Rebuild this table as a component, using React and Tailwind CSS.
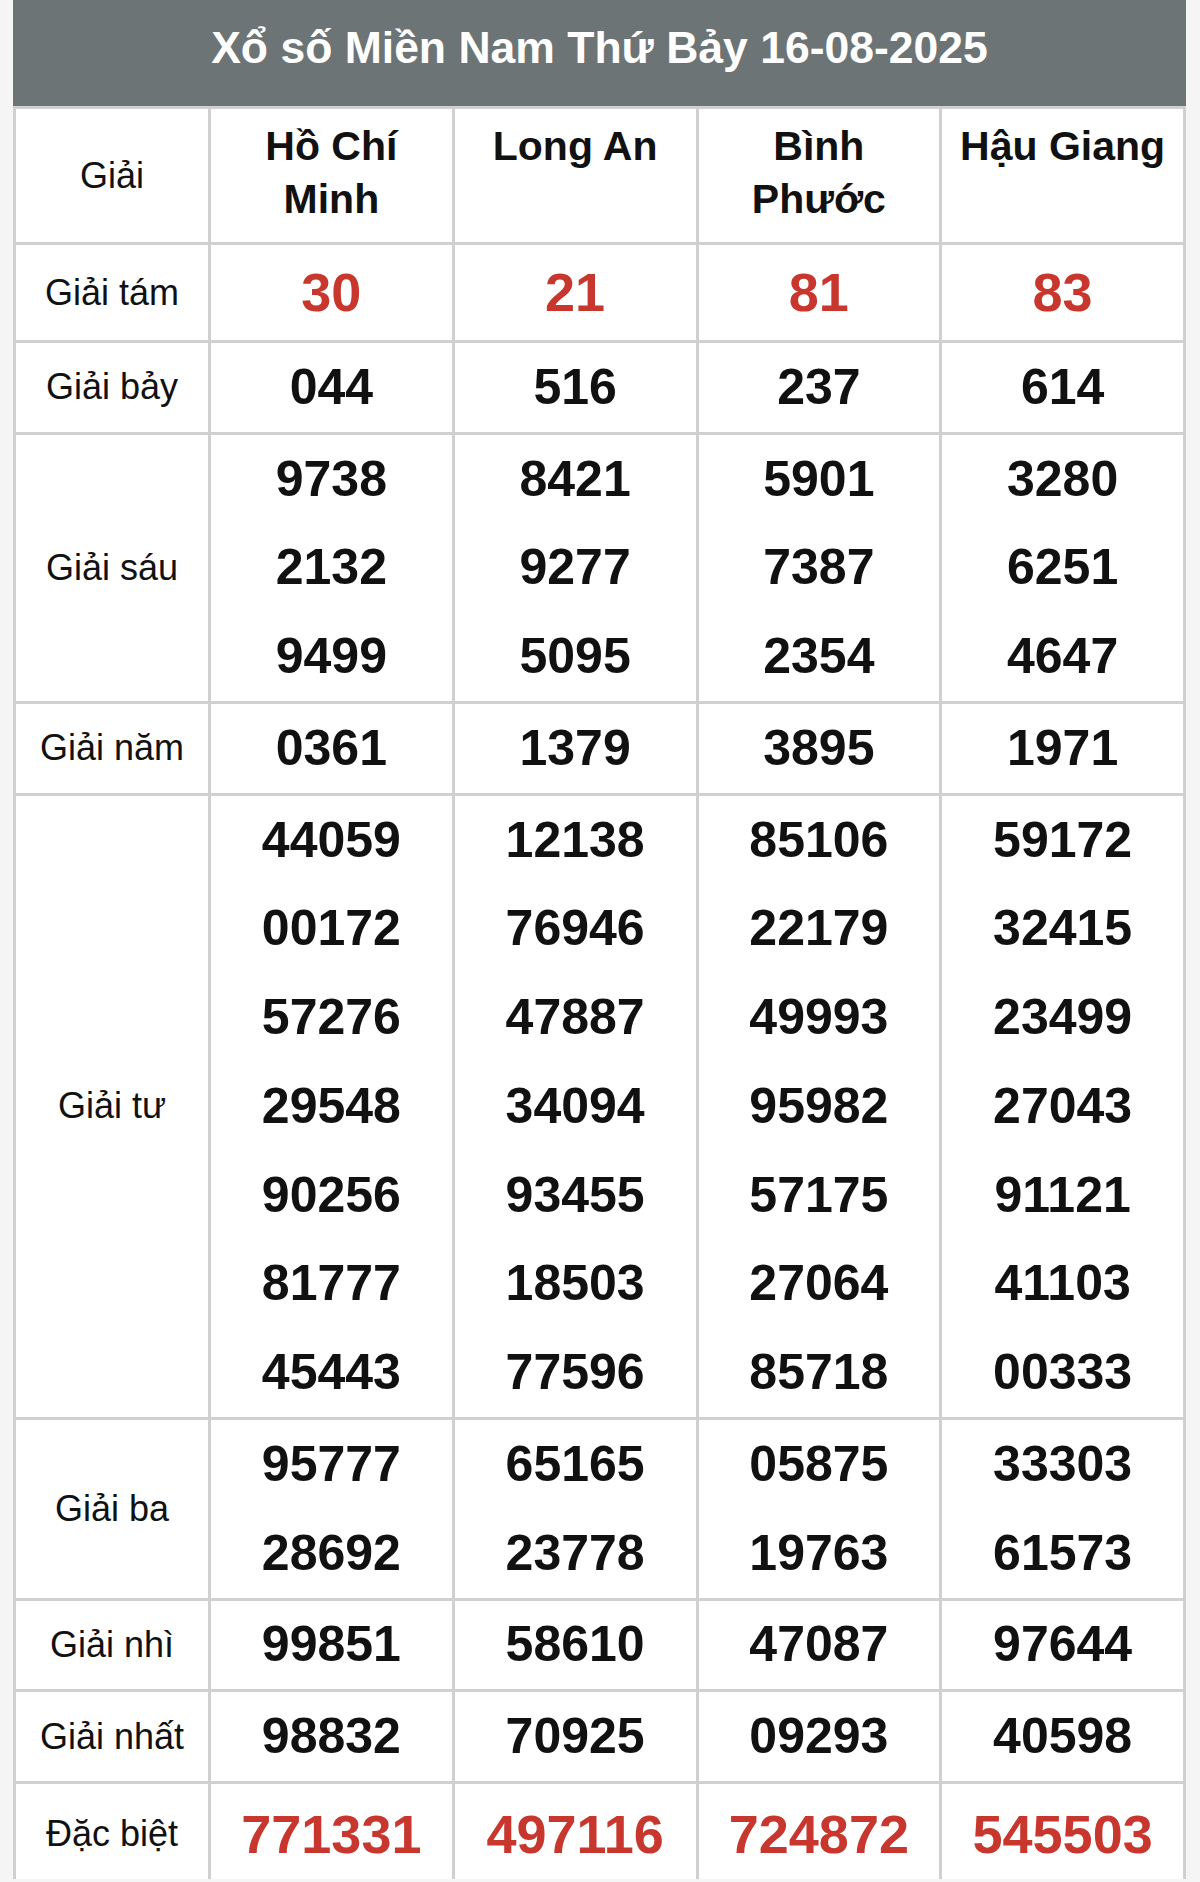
import React from "react";

const provinces = ["Hồ Chí Minh", "Long An", "Bình Phước", "Hậu Giang"];

const rows = [
  { label: "Giải tám", red: true, big: "tam", values: [["30"], ["21"], ["81"], ["83"]] },
  { label: "Giải bảy", values: [["044"], ["516"], ["237"], ["614"]] },
  {
    label: "Giải sáu",
    values: [
      ["9738", "2132", "9499"],
      ["8421", "9277", "5095"],
      ["5901", "7387", "2354"],
      ["3280", "6251", "4647"],
    ],
  },
  { label: "Giải năm", values: [["0361"], ["1379"], ["3895"], ["1971"]] },
  {
    label: "Giải tư",
    values: [
      ["44059", "00172", "57276", "29548", "90256", "81777", "45443"],
      ["12138", "76946", "47887", "34094", "93455", "18503", "77596"],
      ["85106", "22179", "49993", "95982", "57175", "27064", "85718"],
      ["59172", "32415", "23499", "27043", "91121", "41103", "00333"],
    ],
  },
  {
    label: "Giải ba",
    values: [
      ["95777", "28692"],
      ["65165", "23778"],
      ["05875", "19763"],
      ["33303", "61573"],
    ],
  },
  { label: "Giải nhì", values: [["99851"], ["58610"], ["47087"], ["97644"]] },
  { label: "Giải nhất", values: [["98832"], ["70925"], ["09293"], ["40598"]] },
  { label: "Đặc biệt", red: true, big: "db", values: [["771331"], ["497116"], ["724872"], ["545503"]] },
];

function Cell({ row, nums }) {
  if (row.big === "tam") {
    return (
      <div className="bg-white h-[95px] flex items-center justify-center text-[54px] font-bold text-[#c8372d]">
        {nums[0]}
      </div>
    );
  }
  if (row.big === "db") {
    return (
      <div className="bg-white h-[95px] flex items-start justify-center pt-[6px] text-[54px] font-bold text-[#c8372d] leading-[88px]">
        {nums[0]}
      </div>
    );
  }
  return (
    <div className="bg-white flex flex-col">
      {nums.map((n, i) => (
        <div key={i} className="h-[88.75px] flex items-center justify-center text-[50px] font-bold text-[#111]">
          {n}
        </div>
      ))}
    </div>
  );
}

export default function App() {
  return (
    <div className="min-h-screen bg-[#f5f5f5] pl-[13px] pr-[14px] font-['Liberation_Sans',Arial,sans-serif]">
      <div className="h-[106px] bg-[#6d7476] flex items-center justify-center pb-[9px] text-white font-bold text-[44.5px]">
        Xổ số Miền Nam Thứ Bảy 16-08-2025
      </div>
      <div className="grid grid-cols-[192px_repeat(4,minmax(0,1fr))] gap-[3px] bg-[#d0d0d0] pt-[3px] px-[3px]">
        <div className="bg-white h-[133px] flex items-center justify-center text-[36px] text-[#111]">Giải</div>
        {provinces.map((p) => (
          <div
            key={p}
            className="bg-white h-[133px] px-[8px] pt-[11px] text-center text-[41px] leading-[53px] font-bold text-[#111]"
          >
            {p}
          </div>
        ))}
        {rows.map((row) => (
          <React.Fragment key={row.label}>
            <div
              className={
                "bg-white flex justify-center text-[36px] text-[#111] " +
                (row.big === "db" ? "items-start pt-[6px] leading-[88px]" : "items-center")
              }
            >
              {row.label}
            </div>
            {row.values.map((nums, i) => (
              <Cell key={i} row={row} nums={nums} />
            ))}
          </React.Fragment>
        ))}
      </div>
    </div>
  );
}
